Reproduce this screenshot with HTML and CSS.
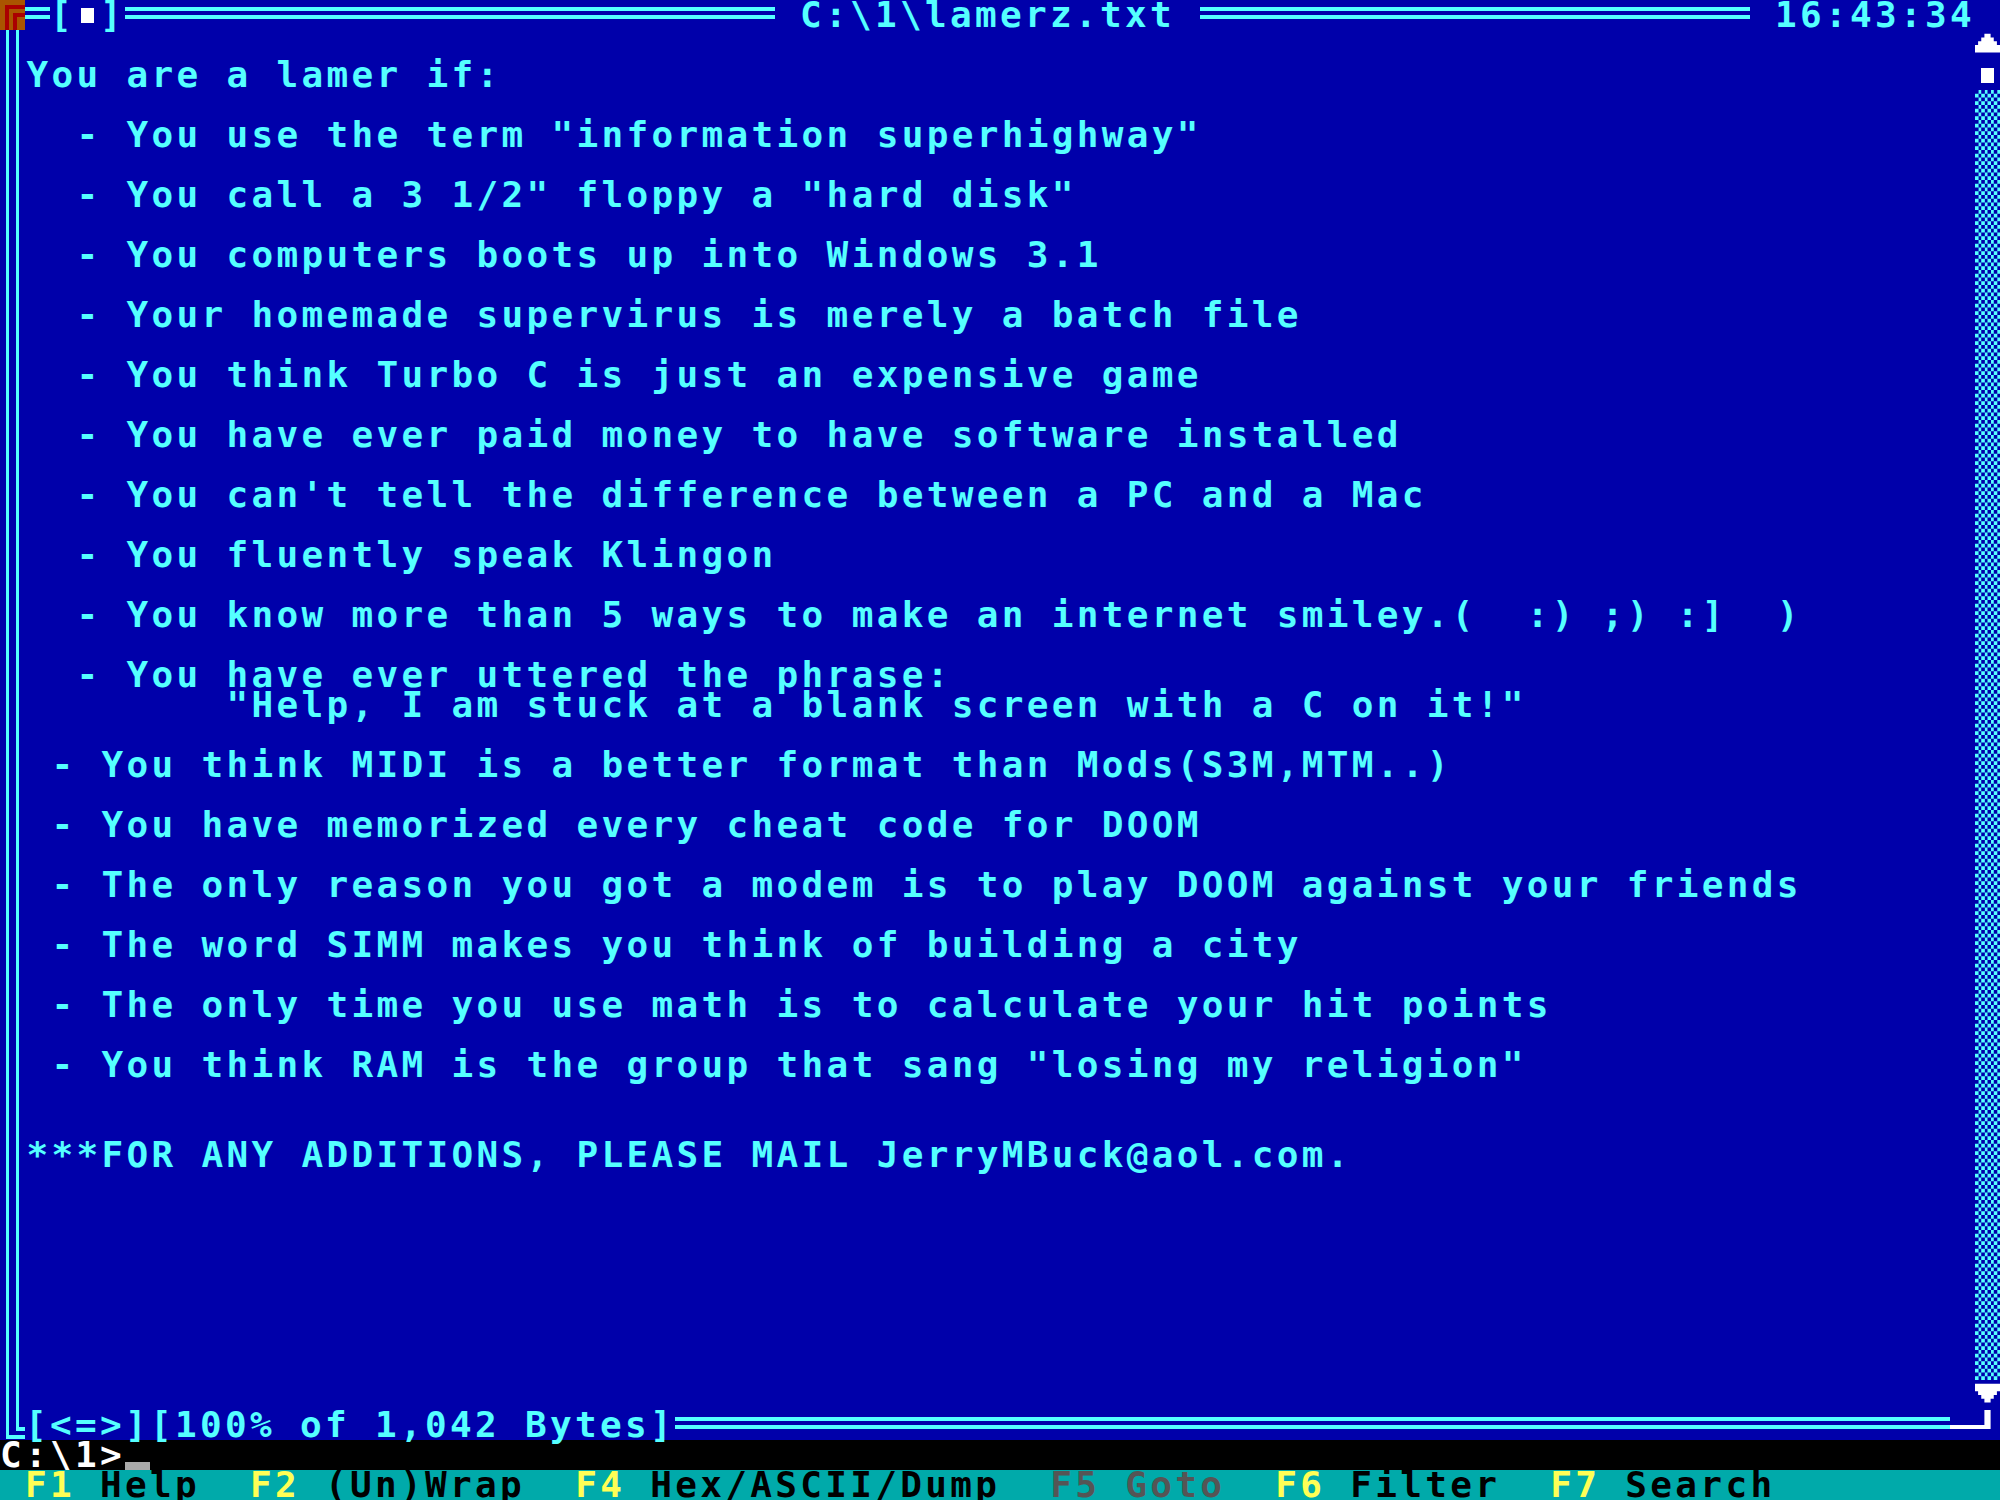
FILE: index.html
```html
<!DOCTYPE html>
<html lang="en">
<head>
  <meta charset="UTF-8">
  <title>C:\1\lamerz.txt</title>
  <link rel="stylesheet" href="styles.css">
</head>
<body>
  <div class="screen">
    <div class="window">
      <div class="titlebar">
        <span class="cell">
          <svg width="25" height="30" viewBox="0 0 25 30">
            <rect width="25" height="30" fill="#aa5500"/>
            <path d="M5 30V5h20v4H9v21z M13 30V13h12v4h-8v13z" fill="#aa0000"/>
          </svg>
        </span>
        <span class="dbl w1"></span>
        <span class="txt">[</span>
        <span class="cell box-cell"><i class="box"></i></span>
        <span class="txt">]</span>
        <span class="dbl w26"></span>
        <span class="txt"> C:\1\lamerz.txt </span>
        <span class="dbl grow"></span>
        <span class="txt"> 16:43:34 </span>
      </div>

      <div class="viewer">
        <div class="frame-left"></div>
<pre class="content">You are a lamer if:

  - You use the term "information superhighway"

  - You call a 3 1/2" floppy a "hard disk"

  - You computers boots up into Windows 3.1

  - Your homemade supervirus is merely a batch file

  - You think Turbo C is just an expensive game

  - You have ever paid money to have software installed

  - You can't tell the difference between a PC and a Mac

  - You fluently speak Klingon

  - You know more than 5 ways to make an internet smiley.(  :) ;) :]  )

  - You have ever uttered the phrase:
        "Help, I am stuck at a blank screen with a C on it!"

 - You think MIDI is a better format than Mods(S3M,MTM..)

 - You have memorized every cheat code for DOOM

 - The only reason you got a modem is to play DOOM against your friends

 - The word SIMM makes you think of building a city

 - The only time you use math is to calculate your hit points

 - You think RAM is the group that sang "losing my religion"


***FOR ANY ADDITIONS, PLEASE MAIL JerryMBuck@aol.com.</pre>
        <div class="scrollbar">
          <div class="cell">
            <svg width="25" height="30" viewBox="0 0 25 30">
              <polygon fill="#fff" points="9.4,3.75 15.6,3.75 15.6,7.5 18.75,7.5 18.75,11.25 21.9,11.25 21.9,15 25,15 25,22.5 0,22.5 0,15 3.1,15 3.1,11.25 6.25,11.25 6.25,7.5 9.4,7.5"/>
            </svg>
          </div>
          <div class="cell box-cell"><i class="box"></i></div>
          <div class="track"></div>
          <div class="cell">
            <svg width="25" height="30" viewBox="0 0 25 30">
              <polygon fill="#fff" points="0,3.75 25,3.75 25,11.25 21.9,11.25 21.9,15 18.75,15 18.75,18.75 15.6,18.75 15.6,22.5 9.4,22.5 9.4,18.75 6.25,18.75 6.25,15 3.1,15 3.1,11.25 0,11.25"/>
            </svg>
          </div>
        </div>
      </div>

      <div class="statusbar">
        <span class="cell">
          <svg width="25" height="30" viewBox="0 0 25 30">
            <path d="M6 0h3v25h16v4H6z M16 0h3v17h6v4h-9z" fill="#55ffff"/>
          </svg>
        </span>
        <span class="txt">[&lt;=&gt;][100% of 1,042 Bytes]</span>
        <span class="dbl grow"></span>
        <span class="resize">
          <svg width="50" height="30" viewBox="0 0 50 30">
            <path d="M0 15h34.4V0h6.2v19H0z" fill="#fff"/>
          </svg>
        </span>
      </div>
    </div>

    <div class="prompt"><span class="txt">C:\1&gt;</span><span class="cursor"></span></div>
    <div class="fkeys"> <b>F1</b> Help  <b>F2</b> (Un)Wrap  <b>F4</b> Hex/ASCII/Dump  <span class="off"><b>F5</b> Goto</span>  <b>F6</b> Filter  <b>F7</b> Search</div>
  </div>
</body>
</html>
```

FILE: styles.css
```css
:root {
  --blue: #0000aa;
  --cyan: #55ffff;
  --teal: #00aaaa;
  --yellow: #ffff55;
}
body {
  margin: 0;
  background-color: #000;
  font-family: "DejaVu Sans Mono", "Liberation Mono", monospace;
  font-weight: bold;
  font-size: 36px;
  letter-spacing: 3.33px; /* 25px per text column */
  line-height: 30px;
}
.screen {
  width: 2000px;
  height: 1500px;
  display: flex;
  flex-direction: column;
}
.window {
  background-color: var(--blue);
  color: var(--cyan);
  height: 1440px;
  display: flex;
  flex-direction: column;
}
.cell {
  width: 25px;
  height: 30px;
  flex: none;
  display: block;
}
.cell svg, .resize svg {
  display: block;
}
.txt {
  white-space: pre;
  flex: none;
}

/* double horizontal frame line */
.dbl {
  height: 30px;
  flex: none;
  background: linear-gradient(to bottom, transparent 7px, var(--cyan) 7px 11px, transparent 11px 15px, var(--cyan) 15px 19px, transparent 19px);
}
.dbl.w1 { width: 25px; }
.dbl.w26 { width: 650px; }
.dbl.grow { flex: 1; }

.titlebar, .statusbar {
  display: flex;
  height: 30px;
}
.box-cell {
  display: flex;
  align-items: center;
  justify-content: center;
}
.box {
  width: 12.5px;
  height: 15px;
  background-color: #fff;
}

.viewer {
  display: grid;
  grid-template-columns: 25px 1fr 25px;
  height: 1380px;
}
.frame-left {
  background: linear-gradient(to right, transparent 6px, var(--cyan) 6px 9px, transparent 9px 16px, var(--cyan) 16px 19px, transparent 19px);
}
.content {
  margin: 0;
  padding: 30px 0 0 1.5px;
  font: inherit;
  color: var(--cyan);
  overflow: hidden;
}
.scrollbar {
  display: flex;
  flex-direction: column;
}
.track {
  flex: 1;
  background-color: var(--blue);
  background-image: conic-gradient(var(--cyan) 25%, var(--blue) 0 50%, var(--cyan) 0 75%, var(--blue) 0);
  background-size: 6.25px 7.5px;
}
.resize {
  width: 50px;
  flex: none;
}

.prompt {
  display: flex;
  height: 30px;
  color: #fff;
}
.cursor {
  width: 25px;
  height: 8px;
  align-self: flex-end;
  background-color: #aaa;
}
.fkeys {
  height: 30px;
  background-color: var(--teal);
  color: #000;
  white-space: pre;
}
.fkeys b {
  color: var(--yellow);
}
.fkeys .off,
.fkeys .off b {
  color: #555;
}
```
